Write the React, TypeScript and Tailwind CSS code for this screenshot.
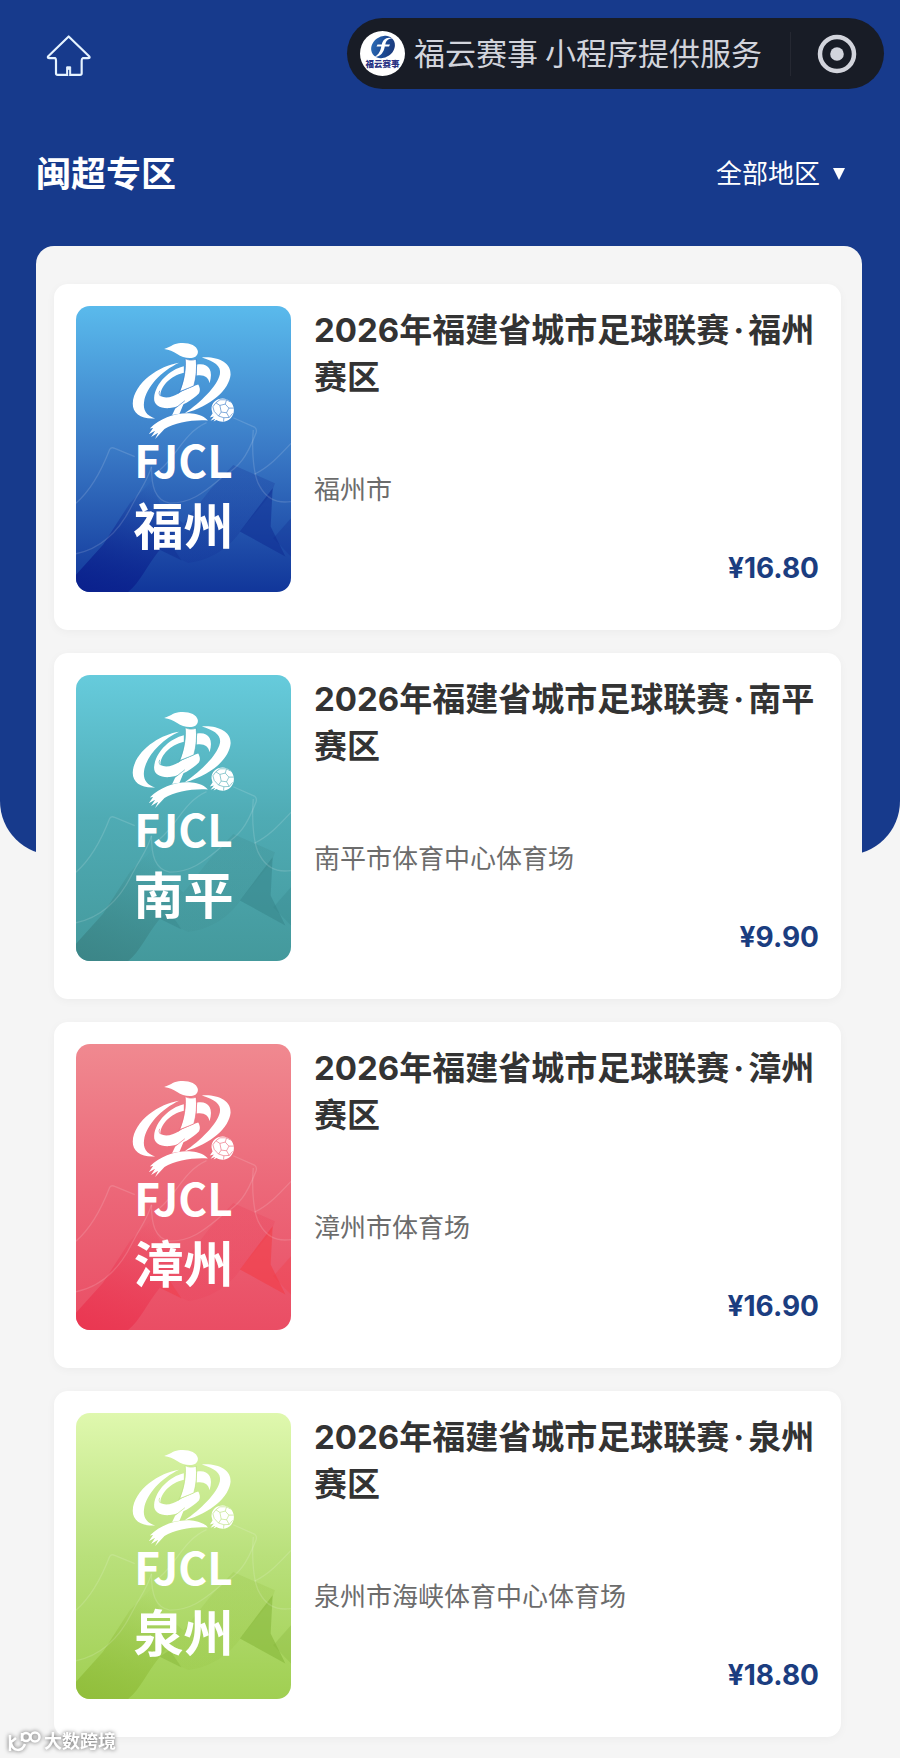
import { useState } from 'react';

const SANS = "font-['Inter','Noto_Sans_CJK_SC',sans-serif]";

type Zone = {
  id: string;
  city: string;
  venue: string;
  price: string;
  from: string;
  mid: string;
  to: string;
  dark: string;
  accent: string;
};

const zones: Zone[] = [
  { id: 'fuzhou', city: '福州', venue: '福州市', price: '16.80', from: '#5abaec', mid: '#3a7ac6', to: '#11369a', dark: '#0a1f8c', accent: '#0f2c92' },
  { id: 'nanping', city: '南平', venue: '南平市体育中心体育场', price: '9.90', from: '#66cbdc', mid: '#4fabb4', to: '#44999c', dark: '#3b8486', accent: '#36858a' },
  { id: 'zhangzhou', city: '漳州', venue: '漳州市体育场', price: '16.90', from: '#f08990', mid: '#ec6879', to: '#ea4d64', dark: '#ea3550', accent: '#f23a44' },
  { id: 'quanzhou', city: '泉州', venue: '泉州市海峡体育中心体育场', price: '18.80', from: '#dff8ae', mid: '#b9e07b', to: '#a0cf52', dark: '#90bd3a', accent: '#84b437' },
];

function HomeIcon() {
  return (
    <svg viewBox="140 103 138 128" className="h-[43px] w-[46px]" fill="none" stroke="#e6f3ff" strokeWidth="6.500" strokeLinejoin="round" aria-hidden="true">
      <path d="M208 110 146 170Q144 175 150 175H168Q170 177 170 183V220Q170 225 175 225H242Q247 225 247 220V183Q247 176 250 175H266Q273 175 270 170Z" />
      <path d="M202 225V201H214V225" fill="#e6f3ff" strokeWidth="3" />
      <path d="M208 210V228" stroke="#173a8c" strokeWidth="3" />
    </svg>
  );
}

function BrandMark() {
  return (
    <svg viewBox="0 0 45 45" className="size-[45px] shrink-0" role="img" aria-label="福云赛事">
      <defs>
        <linearGradient id="brand" x1="0" y1="0" x2="1" y2="1">
          <stop offset="0" stopColor="#2f74bd" />
          <stop offset="0.5" stopColor="#1d4d98" />
          <stop offset="1" stopColor="#19316f" />
        </linearGradient>
      </defs>
      <circle cx="22.500" cy="22.500" r="22.500" fill="#fff" />
      <ellipse cx="23" cy="16" rx="12.500" ry="10.500" transform="rotate(-35 23 16)" fill="url(#brand)" />
      <path d="M33 7.500C27 5 22.500 8.500 21.800 13.500H17.500L16.500 15.500H21.300C20.500 19.500 19 23.500 14.500 26C21 25.500 23.800 21 24.800 15.500H29L30 13.500H25.300C26 9.500 28.500 7 33 7.500Z" fill="#fff" />
      <text x="22.500" y="36" textAnchor="middle" fontSize="8.500" fontWeight="900" fill="#2b3585" fontFamily="Noto Sans CJK SC, sans-serif">福云赛事</text>
    </svg>
  );
}

function TargetIcon() {
  return (
    <svg viewBox="0 0 40 40" className="size-10" aria-hidden="true">
      <circle cx="20" cy="20" r="17" fill="none" stroke="#d2d4dc" strokeWidth="4.500" />
      <circle cx="20" cy="20" r="6.800" fill="#d2d4dc" />
    </svg>
  );
}

function PosterArt({ zone }: { zone: Zone }) {
  const sky = `sky-${zone.id}`;
  const hill = `hill-${zone.id}`;
  const peak = `peak-${zone.id}`;
  return (
    <svg viewBox="49 47 644 860" preserveAspectRatio="none" className="col-start-1 row-start-1 h-full w-full" aria-hidden="true">
      <defs>
        <linearGradient id={sky} x1="0" y1="0" x2="0" y2="1">
          <stop offset="0" stopColor={zone.from} />
          <stop offset="0.5" stopColor={zone.mid} />
          <stop offset="1" stopColor={zone.to} />
        </linearGradient>
        <linearGradient id={hill} x1="0.6" y1="0" x2="0.2" y2="1">
          <stop offset="0" stopColor={zone.dark} stopOpacity="0.05" />
          <stop offset="1" stopColor={zone.dark} stopOpacity="0.9" />
        </linearGradient>
        <linearGradient id={peak} x1="0.5" y1="0" x2="0.5" y2="1">
          <stop offset="0" stopColor={zone.dark} stopOpacity="0.22" />
          <stop offset="1" stopColor={zone.dark} stopOpacity="0.15" />
        </linearGradient>
      </defs>
      <rect x="49" y="47" width="644" height="860" fill={`url(#${sky})`} />
      <path d="M49 855 130 765 210 640 275 575 300 640 370 700 300 780C260 830 240 880 205 907H49Z" fill={`url(#${hill})`} />
      <path d="M300 780 380 690 450 600 520 525 645 580 635 610 545 720C500 790 430 815 385 820Z" fill={`url(#${peak})`} />
      <path d="M638 595 540 725 676 800 632 710Z" fill={zone.accent} fillOpacity="0.55" />
      <path d="M693 685 640 745 693 800Z" fill={zone.accent} fillOpacity="0.3" />
      <path d="M300 780 365 812 330 760Z" fill={zone.accent} fillOpacity="0.4" />
      <g fill="none" stroke="#fff" strokeOpacity="0.14" strokeWidth="4">
        <path d="M49 640C95 600 130 530 150 478Q155 470 165 475L225 500" />
        <path d="M49 792C130 775 180 720 215 650C240 600 265 570 275 530" />
        <path d="M275 530C275 590 285 630 330 640C400 640 440 600 490 560" />
        <path d="M300 540C350 500 370 430 440 398" />
        <path d="M520 383 585 412Q592 418 588 430C560 500 540 530 490 560" />
        <path d="M580 420C575 480 580 560 600 590C625 635 660 640 693 635" />
        <path d="M583 553C630 530 665 490 693 460" />
      </g>
      <g transform="translate(180 120)" fill="#fff">
        <path d="M133 56C150 52 158 42 176 39C204 35 230 44 234 62C235 74 228 82 214 83C198 84 184 79 172 71C160 63 148 59 133 56Z" />
        <path d="M178 98C120 106 42 158 39 220C38 250 65 268 106 265C80 257 69 240 73 215C79 172 125 122 178 98Z" />
        <path d="M192 108C150 118 107 158 103 203C101 226 122 236 150 234C188 229 217 210 237 190C243 181 239 169 235 163L224 167C205 176 190 180 176 190C160 200 138 207 122 198C120 172 150 137 192 128Z" />
        <path d="M196 85C199 110 195 150 181 184C192 179 202 176 222 167C229 142 232 112 228 87C216 91 206 90 196 85Z" />
        <path d="M232 103C262 97 283 117 269 159C266 141 252 132 230 136Z" />
        <path d="M246 82C292 78 335 97 332 134C328 178 275 228 194 250C242 217 292 168 300 132C305 107 282 93 246 82Z" />
        <path d="M167 234 195 212 179 251 157 255Z" />
        <path d="M90 295C122 264 170 246 215 250C236 252 256 260 264 271C222 268 165 276 134 297L106 327 115 308 94 321 106 302 87 313 100 294Z" />
        <path d="M275 238C274 218 290 205 308 205C327 205 342 220 342 240C342 260 327 275 308 275C301 275 295 273 290 270L281 274 286 266 272 272 282 259 270 262 278 250Z" />
      </g>
      <g transform="translate(180 120)" fill="none" stroke={zone.mid} strokeWidth="2.200" strokeOpacity="0.85">
        <path d="M300 226 316 222 327 234 320 248 304 246Z" />
        <path d="M300 226 288 218M316 222 320 209M327 234 341 234M320 248 328 262M304 246 296 258M288 218 279 230 283 244 296 258 312 263 328 262 338 250M288 218 300 209 320 209 332 216M312 263 311 274" />
        <path d="M196 85C206 91 218 91 229 87M196 85C199 110 195 150 176 190M229 87C232 112 229 142 222 167M181 184C192 179 202 176 222 167M122 198C117 192 117 188 120 182M167 234 195 212" />
      </g>
    </svg>
  );
}

function Poster({ zone }: { zone: Zone }) {
  return (
    <div className="grid h-[286px] w-[215px] shrink-0 overflow-hidden rounded-[14px]">
      <PosterArt zone={zone} />
      <div className="col-start-1 row-start-1 flex flex-col items-center pt-[129px] font-['Noto_Sans_CJK_SC',sans-serif] font-bold text-white">
        <span className="text-[44px] leading-[48px]">FJCL</span>
        <span className="mt-[10px] text-[50px] leading-[60px]">{zone.city}</span>
      </div>
    </div>
  );
}

function ZoneCard({ zone }: { zone: Zone }) {
  return (
    <li>
      <a href={`#${zone.id}`} className="flex gap-[23px] rounded-[14px] bg-white px-[22px] pt-[22px] pb-[38px] shadow-[0_2px_10px_rgba(0,0,0,0.04)]">
        <Poster zone={zone} />
        <div className="flex min-w-0 flex-1 flex-col pt-px">
          <h2 className="text-[33px] leading-[47px] font-bold text-[#333]">
            2026年福建省城市足球联赛<span className="mx-1">·</span>{zone.city}赛区
          </h2>
          <p className="mt-[70px] text-[26px] leading-[38px] text-[#6c6c6c]">{zone.venue}</p>
          <p className="mt-auto pb-[7px] text-right text-[28px] leading-[34px] font-bold text-[#1b3d80]">¥{zone.price}</p>
        </div>
      </a>
    </li>
  );
}

function Watermark() {
  return (
    <div className="fixed bottom-1 left-2 flex items-center gap-[2px] text-white drop-shadow-[0_0_2px_rgba(0,0,0,0.6)]">
      <svg viewBox="0 0 34 22" className="h-[22px] w-[34px]" fill="none" stroke="currentColor" strokeWidth="2.500" aria-hidden="true">
        <path d="M2 4V20M2 12 8 7M3 12C5 21 14 21 17 13M14 2V10" />
        <circle cx="18" cy="6" r="4" />
        <circle cx="27" cy="6" r="4.500" />
      </svg>
      <span className="text-[18px] leading-6 font-bold">大数跨境</span>
    </div>
  );
}

export default function App() {
  const [region, setRegion] = useState('全部地区');
  return (
    <div className={`grid min-h-screen bg-[#f5f5f5] ${SANS}`}>
      <div className="col-start-1 row-start-1 h-[855px] rounded-b-[54px] bg-[#173a8c]" />
      <div className="col-start-1 row-start-1 min-w-0">
        <header className="flex items-start justify-between pt-[18px] pr-4 pl-[46px]">
          <a href="#home" aria-label="首页" className="mt-4">
            <HomeIcon />
          </a>
          <div className="flex h-[71px] items-center rounded-full bg-[#181c26] pr-[27px] pl-[13px]">
            <BrandMark />
            <span className="ml-[9px] pb-1 font-['Noto_Sans_CJK_SC',sans-serif] text-[31px] leading-[46px] text-[#d2d4dc]">福云赛事 小程序提供服务</span>
            <span className="mr-[26px] ml-[28px] h-11 w-px bg-[#252832]" />
            <button type="button" aria-label="关闭">
              <TargetIcon />
            </button>
          </div>
        </header>

        <div className="mt-[61px] flex h-12 items-center justify-between pr-[55px] pl-9 text-white">
          <h1 className="text-[35px] leading-[48px] font-bold">闽超专区</h1>
          <label className="flex items-center gap-3">
            <select
              aria-label="地区"
              value={region}
              onChange={(e) => setRegion(e.target.value)}
              className="appearance-none bg-transparent text-[26px] leading-[38px] text-white outline-none"
            >
              <option>全部地区</option>
              {zones.map((z) => (
                <option key={z.id}>{z.city}</option>
              ))}
            </select>
            <svg viewBox="0 0 12 12" className="size-3" fill="currentColor" aria-hidden="true">
              <path d="M0 0H12L6 12Z" />
            </svg>
          </label>
        </div>

        <main className="mt-12 mr-[38px] ml-9 rounded-t-[18px] bg-[#f5f5f5] pt-[38px] pr-[21px] pb-5 pl-[18px]">
          <ul className="flex flex-col gap-[23px]">
            {zones.map((z) => (
              <ZoneCard key={z.id} zone={z} />
            ))}
          </ul>
        </main>
      </div>
      <Watermark />
    </div>
  );
}
